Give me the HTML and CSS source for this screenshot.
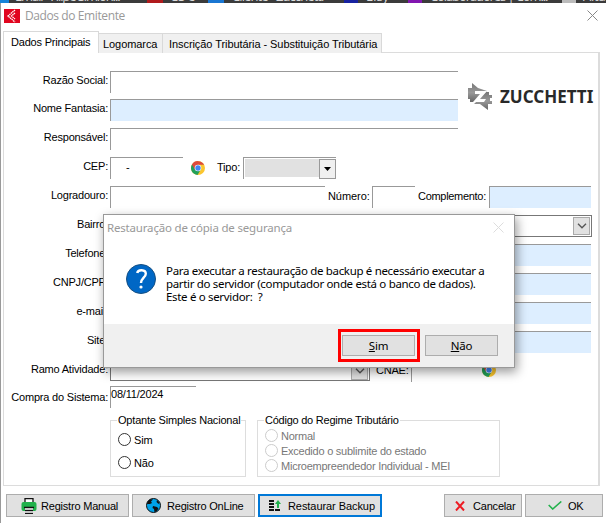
FILE: index.html
```html
<!DOCTYPE html>
<html lang="pt-BR">
<head>
<meta charset="utf-8">
<title>Dados do Emitente</title>
<link rel="stylesheet" href="styles.css">
</head>
<body>
<svg class="defs" width="0" height="0">
  <symbol id="chrome" viewBox="0 0 14 14">
    <circle cx="7" cy="7" r="7" fill="#fbc62f"/>
    <path d="M7 7 1 3.4A7 7 0 0 0 6.5 14L9.8 8.6Z" fill="#22a05a"/>
    <path d="M7 7 3.9 8.5.95 3.5A7 7 0 0 1 13.1 3.8H7Z" fill="#dc4a3d"/>
    <circle cx="7" cy="7" r="3.3" fill="#fff"/><circle cx="7" cy="7" r="2.7" fill="#4285f4"/>
  </symbol>
  <symbol id="chev" viewBox="0 0 10 6"><path d="M1 .8 5 4.8 9 .8" fill="none" stroke="#555" stroke-width="1.3"/></symbol>
</svg>
<div class="strip">
  <span class="t1">Email - Filipe Simion...</span><i class="red"></i><span class="t2">CS e</span><i class="blue"></i><span class="t3">Cliente - Zucchetti</span><i class="navy"></i><span class="t4">EIsy</span><i class="purple"></i><span class="t5">Colaboradores | Com...</span><i class="grey"></i><span class="t6">Altar</span>
</div>
<main class="window">
  <header class="title">
    <svg class="app" width="16" height="14" viewBox="0 0 16 14"><path fill="#e1051f" d="M0 0h16v14H0z"/><path d="M11 1 4 7l7 6M11 4 7.5 7l3.500 3" fill="none" stroke="#fff" stroke-width="1.300" stroke-dasharray="1.500 .5"/></svg>
    <span>Dados do Emitente</span>
    <svg class="close" width="11" height="11" viewBox="0 0 11 11"><path d="m.5.5 10 10m0-10-10 10" stroke="#888" fill="none"/></svg>
  </header>
  <nav class="tabs"><span class="tab on">Dados Principais</span><span class="tab logo-tab">Logomarca</span><span class="tab insc">Inscrição Tributária - Substituição Tributária</span></nav>
  <section class="panel">
    <div class="form">
      <div class="row"><label>Razão Social:</label><span class="field long"></span></div>
      <div class="row"><label>Nome Fantasia:</label><span class="field long tint"></span></div>
      <div class="row"><label>Responsável:</label><span class="field long"></span></div>
      <div class="row"><label>CEP:</label><span class="field cep">-</span><svg class="chrome" width="14" height="14"><use href="#chrome"/></svg><span class="tipo">Tipo:</span><span class="select"><i></i><b><svg width="7" height="4"><path d="M0 0h7L3.500 4z"/></svg></b></span></div>
      <div class="row"><label>Logradouro:</label><span class="field street"></span><span class="num">Número:</span><span class="field number"></span><span class="comp">Complemento:</span><span class="field extra tint"></span></div>
      <div class="row"><label>Bairro:</label><span class="combo wide"><b><svg width="10" height="6"><use href="#chev"/></svg></b></span></div>
      <div class="row"><label>Telefone:</label><span class="field full tint"></span></div>
      <div class="row"><label>CNPJ/CPF:</label><span class="field full tint"></span></div>
      <div class="row"><label>e-mail:</label><span class="field full tint"></span></div>
      <div class="row"><label>Site:</label><span class="field full tint"></span></div>
      <div class="row"><label>Ramo Atividade:</label><span class="combo branch"><b><svg width="10" height="6"><use href="#chev"/></svg></b></span><span class="cnae">CNAE:</span><span class="field code"></span><svg class="chrome near" width="14" height="14"><use href="#chrome"/></svg></div>
      <div class="row last"><label>Compra do Sistema:</label><span class="field date">08/11/2024</span></div>
    </div>
    <div class="brand">
      <svg width="25" height="27" viewBox="0 0 25 27">
        <defs><linearGradient id="g" x2="0" y2="1"><stop stop-color="#777"/><stop offset=".5" stop-color="#999"/><stop offset="1" stop-color="#666"/></linearGradient></defs>
        <path d="M0 5h4V0l6 5 9 3-10 11H2v-3H0z" fill="url(#g)"/><path d="M18 9h3v3h3v3h-2v3h2v3h-4v6l-8-6H6z" fill="url(#g)"/>
        <path d="M7 8h12l-7 8h6l-2 3H5l7-8H7z" fill="#fff"/>
      </svg>
      <strong>ZUCCHETTI</strong>
    </div>
    <div class="groups">
      <fieldset class="simples"><legend>Optante Simples Nacional</legend><p><i></i>Sim</p><p><i></i>Não</p></fieldset>
      <fieldset class="regime"><legend>Código do Regime Tributário</legend><p><i></i>Normal</p><p><i></i>Excedido o sublimite do estado</p><p><i></i>Microempreendedor Individual - MEI</p></fieldset>
    </div>
  </section>
  <footer class="actions">
    <button class="manual"><svg width="16" height="16" viewBox="0 0 16 16"><path d="M4 5V.7h8V5" fill="#fff" stroke="#111" stroke-width="1.300"/><rect x=".5" y="4" width="15" height="9" rx="2" fill="#22b14c"/><path d="M4 9h8v6.300H4z" fill="#fff"/><path d="M3 9.500h10M4 12.500h8M4 15.300h8" stroke="#111" stroke-width="1.300"/></svg><span>Registro Manual</span></button>
    <button class="online"><svg width="15" height="15" viewBox="0 0 15 15"><circle cx="7.500" cy="7.500" r="7" fill="#00a2e8" stroke="#111"/><path d="M1.500 3.500 4 1.200l3 .3-2 2 1 1.500-2 1H2L1 6zM7 8l4 1 1.500 1.500-2 3-2 .5-.5-3-1.500-1zM11 2l2.500 2.500-1 1.500-2-2z" fill="#111"/></svg><span>Registro OnLine</span></button>
    <button class="restore"><svg width="12" height="11" viewBox="0 0 12 11"><path d="M0 1h5M0 4h5M0 7h5M0 10h5M6 10h5" stroke="#111" stroke-width="2"/><path d="M8 8V4H6l3-4 3 4h-2v4z" fill="#22b14c"/></svg><span>Restaurar Backup</span></button>
    <button class="cancel"><svg width="10" height="10" viewBox="0 0 10 10"><path d="m1 .5 8 9m0-9-8 9" stroke="#ed1c24" stroke-width="2"/></svg><span>Cancelar</span></button>
    <button class="ok"><svg width="14" height="9" viewBox="0 0 14 9"><path d="m.7 4 4 4 8.600-7.500" stroke="#22b14c" stroke-width="1.600" fill="none"/></svg><span>OK</span></button>
  </footer>
</main>
<div class="dialog">
  <header><span>Restauração de cópia de segurança</span><svg width="11" height="11" viewBox="0 0 11 11"><path d="m.5.5 10 10m0-10-10 10" stroke="#ddd" fill="none"/></svg></header>
  <div class="message">
    <svg width="30" height="30" viewBox="0 0 30 30"><circle cx="15" cy="15" r="14.500" fill="#0067c5" stroke="#164f82"/><path d="M11.200 9c.6-3.800 8.600-3.800 8.600.7 0 3.800-4.800 4.300-4.800 9.300" fill="none" stroke="#fff" stroke-width="2.400"/><circle cx="15" cy="23" r="1.600" fill="#fff"/></svg>
    <p><span>Para executar a restauração de backup é necessário executar a</span><span>partir do servidor (computador onde está o banco de dados).</span><span>Este é o servidor:&nbsp; ?</span></p>
  </div>
  <footer><span class="mark"><button><u>S</u>im</button></span><button><u>N</u>ão</button></footer>
</div>
</body>
</html>
```
FILE: styles.css
```css
* { box-sizing: border-box; }
body { margin: 0; width: 606px; height: 523px; overflow: hidden; background: #fff; color: #000; font: 11px/14px "Liberation Sans", Arial, sans-serif; letter-spacing: -.2px; position: relative; white-space: nowrap; }
svg { display: block; flex: none; }
.defs { position: absolute; }
b { font-weight: normal; }
.strip { height: 3px; background: linear-gradient(90deg, #1583d8 9px, #3b3b3b 9px); overflow: hidden; color: #ddd; font: 13px/14px "Open Sans", sans-serif; display: flex; align-items: flex-end; padding-left: 15px; }
.strip span { height: 14px; flex: none; }
.strip i { height: 3px; width: 14px; flex: none; }
.strip .t1 { width: 132px; } .strip .t2 { width: 24px; margin-left: 7px; }
.strip .t3 { width: 97px; margin-left: 8px; letter-spacing: -.9px; } .strip .t4 { width: 24px; margin-left: 8px; }
.strip .t5 { width: 110px; margin-left: 8px; letter-spacing: -1.1px; } .strip .t6 { margin-left: 7px; }
.strip .t1 { letter-spacing: -1.1px; }
.strip .red { width: 16px; background: #b01a1c; } .strip .blue { width: 16px; background: #1976d2; margin-left: 14px; }
.strip .navy { background: #1822a0; margin-left: 15px; } .strip .purple { background: #8216b0; margin-left: 18px; } .strip .grey { background: #bbb; margin-left: 22px; }
.window { height: 520px; border-left: 1px solid #999; display: flex; flex-direction: column; }
.title { height: 28px; padding: 0 8px 3px 3px; display: flex; align-items: center; color: #999; font: 12px/16px "Open Sans", sans-serif; letter-spacing: -.4px; }
.title span { margin-left: 5px; }
.close { margin-left: auto; }
.tabs { height: 22px; margin-left: 2px; display: flex; align-items: flex-end; position: relative; z-index: 1; }
.tab { height: 20px; border: 1px solid #d9d9d9; border-left: 0; border-bottom: 0; background: #f0f0f0; padding: 3px 0 0 4px; }
.tab.on { height: 22px; width: 96px; background: #fff; border-left: 1px solid #d9d9d9; padding: 3px 0 0 7px; }
.logo-tab { width: 64px; } .insc { width: 219px; padding-left: 6px; }
.insc, .restore, .logo-tab, .num { letter-spacing: -.07px; }
.panel { height: 434px; width: 597px; margin-left: 2px; margin-top: -1px; border: 1px solid #dcdcdc; border-right-width: 2px; padding-top: 18px; position: relative; }
.form { display: grid; grid-template-rows: 28px repeat(9, 29px) 26px 23px; }
.row { display: flex; align-items: flex-start; }
.row > label { width: 104px; text-align: right; padding-top: 2px; margin-right: 2px; }
.last > label { padding-top: 4px; }
.field { height: 22px; border: solid #999; border-width: 1px 0 0 1px; flex: none; }
.tint { background: #ddeeff; }
.long { width: 348px; } .cep { width: 73px; padding: 2px 0 0 15px; } .street { width: 215px; } .number { width: 43px; } .extra { width: 102px; } .full { width: 481px; } .code { width: 70px; } .date { width: 86px; letter-spacing: -.2px; }
.row > .chrome { margin: 4px 0 0 8px; }
.row > .near { margin: 3px 0 0 1px; }
.tipo { margin: 3px 3px 0 12px; width: 23px; }
.num { margin: 3px 3px 0 3px; width: 41px; } .comp { margin: 3px 3px 0 3px; width: 68px; letter-spacing: -.3px; }
.select { width: 93px; height: 22px; border: solid #999; border-width: 1px 0 0 1px; display: flex; padding: 1px 0 0 1px; }
.select i { background: #e1e1e1; flex: 1; height: 18px; } .select b { width: 17px; height: 20px; border: 1px solid #999; background: #f0f0f0; display: grid; place-items: center; }
.combo { height: 22px; border: 1px solid #777; display: flex; justify-content: flex-end; padding: 1px; }
.combo b { width: 17px; height: 18px; border: 1px solid #aaa; background: #e1e1e1; display: grid; place-items: center; }
.wide { width: 482px; } .branch { width: 260px; height: 21px; }
.cnae { margin: 3px 2px 0 6px; width: 33px; }
.brand { position: absolute; left: 464px; top: 30px; display: flex; align-items: center; letter-spacing: 0; }
.brand strong { font: bold 17px/20px "Noto Sans", sans-serif; color: #292929; margin-left: 7px; }
.groups { display: flex; padding: 4px 0 0 106px; }
fieldset { margin: 0; border: 1px solid #ddd; padding: 0 0 0 7px; height: 64px; min-width: 0; }
legend { padding: 0 1px; margin-left: -1px; height: 14px; }
fieldset p { margin: 0; display: flex; align-items: center; gap: 3px; position: relative; top: 1px; }
fieldset i { width: 13px; height: 13px; border: 1px solid #333; border-radius: 50%; }
.simples { width: 136px; } .simples p { height: 23px; } .regime { width: 243px; margin-left: 11px; color: #777; letter-spacing: -.24px; }
.regime legend { color: #000; } .regime p { height: 15px; } .regime i { border-color: #ccc; }
.actions { display: flex; padding: 8px 0 0 5px; }
button { font: inherit; letter-spacing: inherit; color: #000; background: #e1e1e1; border: 1px solid #adadad; padding: 0; margin: 0; display: flex; align-items: center; }
.actions button { height: 23px; }
.actions .manual { width: 123px; } .actions .online { width: 123px; margin-left: 3px; } .actions .restore { width: 124px; border: 2px solid #0078d7; margin-left: 3px; letter-spacing: -.07px; } .actions .cancel { width: 78px; margin-left: 62px; } .actions .ok { width: 78px; margin-left: 3px; }
.manual svg { margin: 0 4px 0 14px; } .online svg { margin: 0 6px 0 13px; } .restore svg { margin: 0 7px 0 9px; } .cancel svg { margin: 0 8px 0 10px; } .ok svg { margin: 0 6px 0 22px; }
.dialog { position: absolute; left: 103px; top: 214px; width: 412px; height: 154px; background: #fff; border: 1px solid #999; box-shadow: 2px 4px 10px rgba(0,0,0,.4); font: 11.5px/13px "Noto Sans", sans-serif; display: flex; flex-direction: column; }
.dialog header { height: 25px; padding: 0 10px 0 3px; display: flex; justify-content: space-between; align-items: center; color: #999; letter-spacing: -.18px; }
.message { height: 84px; display: flex; padding: 24px 0 0 22px; }
.message p { margin: 0 0 0 10px; letter-spacing: -.33px; }
.message p span { display: block; }
.dialog footer { flex: 1; background: #f0f0f0; display: flex; padding: 5px 0 0 234px; }
.mark { width: 82px; height: 33px; border: 3px solid #f00; padding: 3px 1px; margin-right: 5px; }
.dialog button { width: 73px; height: 21px; justify-content: center; }
.dialog footer > button { margin-top: 6px; }
```
